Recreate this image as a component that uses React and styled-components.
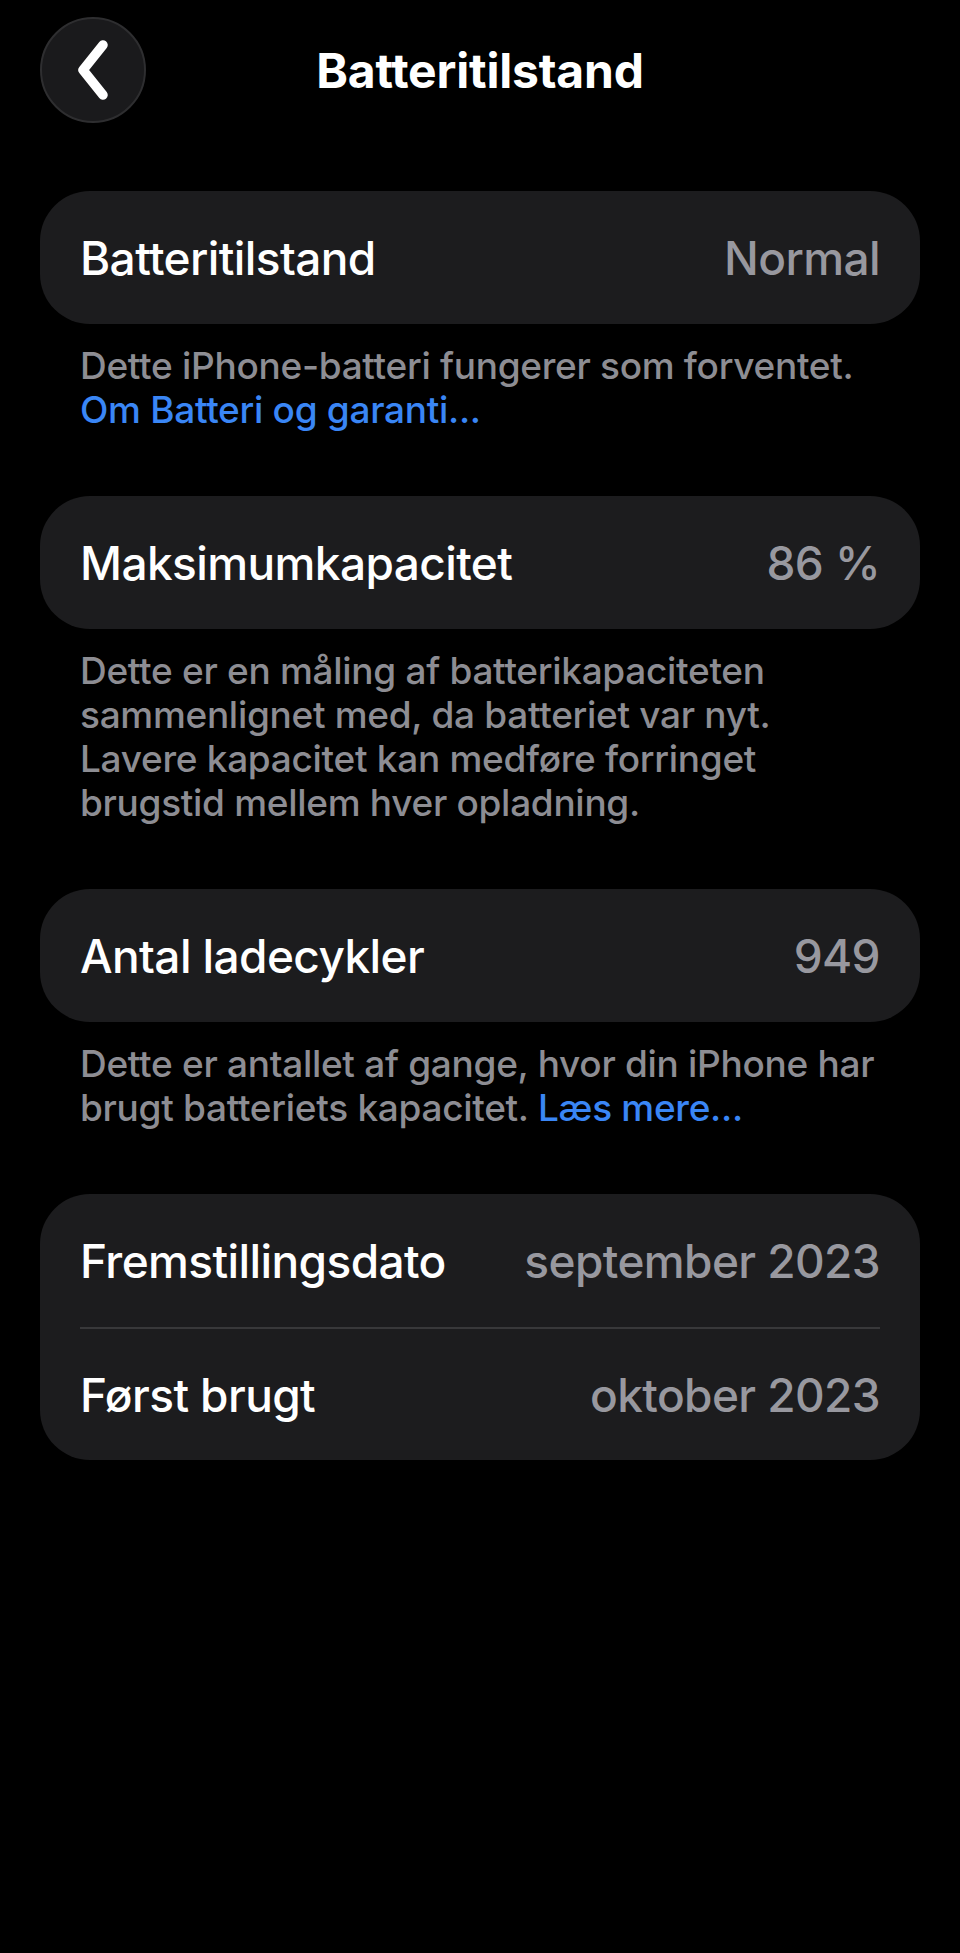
import styled, { createGlobalStyle } from "styled-components";

const GlobalStyle = createGlobalStyle`
  html, body {
    margin: 0;
    padding: 0;
    background: #000;
  }
  body {
    font-family: Inter, "Noto Sans", sans-serif;
    -webkit-font-smoothing: antialiased;
  }
`;

const Screen = styled.div`
  width: 960px;
  min-height: 1953px;
  background: #000;
  color: #fff;
  box-sizing: border-box;
  padding: 17px 40px 0 40px;
`;

const NavBar = styled.div`
  display: grid;
  grid-template-columns: 106px 1fr 106px;
  align-items: center;
  height: 106px;
  margin-bottom: 68px;
`;

const BackButton = styled.button`
  width: 106px;
  height: 106px;
  border-radius: 50%;
  background: #1a1a1c;
  border: 2px solid #2e2e30;
  display: flex;
  align-items: center;
  justify-content: center;
  padding: 0;
  cursor: pointer;
  box-sizing: border-box;
`;

const Title = styled.h1`
  margin: 0;
  text-align: center;
  font-size: 48px;
  font-weight: 700;
  letter-spacing: -0.2px;
  color: #fff;
`;

const Card = styled.div`
  background: #1c1c1e;
  border-radius: 50px;
  padding: 0 40px;
`;

const Row = styled.div`
  display: flex;
  align-items: center;
  justify-content: space-between;
  height: 133px;
  border-top: ${(p) => (p.$divided ? "2px solid #38383a" : "none")};
  box-sizing: border-box;
`;

const Label = styled.span`
  font-size: 46px;
  font-weight: 500;
  letter-spacing: -0.6px;
  color: #fff;
`;

const Value = styled.span`
  font-size: 46px;
  font-weight: 500;
  letter-spacing: -0.6px;
  color: #98989f;
`;

const Footer = styled.p`
  margin: 0;
  padding: 20px 40px 64px 40px;
  font-size: 37px;
  font-weight: 500;
  line-height: 44px;
  letter-spacing: -0.3px;
  color: #8d8d93;
`;

const Link = styled.a`
  color: #3a86f5;
  text-decoration: none;
`;

function Chevron() {
  return (
    <svg width="42" height="62" viewBox="0 0 42 62" fill="none">
      <path
        d="M31 6 L11 31 L31 56"
        stroke="#fff"
        strokeWidth="9.5"
        strokeLinecap="round"
        strokeLinejoin="round"
      />
    </svg>
  );
}

export default function App() {
  return (
    <>
      <GlobalStyle />
      <Screen>
        <NavBar>
          <BackButton aria-label="Tilbage">
            <Chevron />
          </BackButton>
          <Title>Batteritilstand</Title>
          <span />
        </NavBar>

        <Card>
          <Row>
            <Label>Batteritilstand</Label>
            <Value>Normal</Value>
          </Row>
        </Card>
        <Footer>
          Dette iPhone-batteri fungerer som forventet.
          <br />
          <Link>Om Batteri og garanti...</Link>
        </Footer>

        <Card>
          <Row>
            <Label>Maksimumkapacitet</Label>
            <Value>86 %</Value>
          </Row>
        </Card>
        <Footer>
          Dette er en måling af batterikapaciteten
          <br />
          sammenlignet med, da batteriet var nyt.
          <br />
          Lavere kapacitet kan medføre forringet
          <br />
          brugstid mellem hver opladning.
        </Footer>

        <Card>
          <Row>
            <Label>Antal ladecykler</Label>
            <Value>949</Value>
          </Row>
        </Card>
        <Footer>
          Dette er antallet af gange, hvor din iPhone har
          <br />
          brugt batteriets kapacitet. <Link>Læs mere...</Link>
        </Footer>

        <Card>
          <Row>
            <Label>Fremstillingsdato</Label>
            <Value>september 2023</Value>
          </Row>
          <Row $divided>
            <Label>Først brugt</Label>
            <Value>oktober 2023</Value>
          </Row>
        </Card>
      </Screen>
    </>
  );
}
